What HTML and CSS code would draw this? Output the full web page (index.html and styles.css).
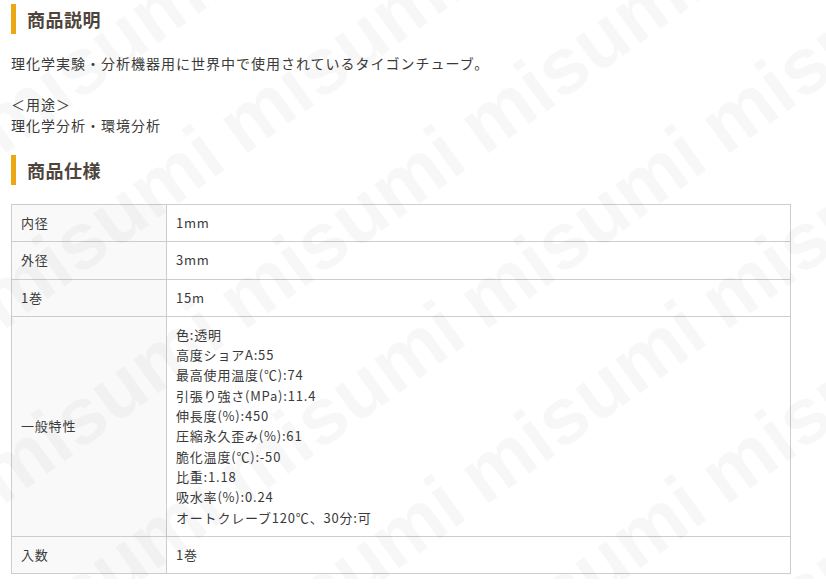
FILE: index.html
```html
<!DOCTYPE html>
<html lang="ja">
  <head>
    <meta charset="UTF-8" />
    <meta name="viewport" content="width=device-width, initial-scale=1.0" />
    <title>商品説明</title>
    <link rel="stylesheet" href="styles.css">
  </head>
  <body>
    <div class="page">
      <h2 class="title">商品説明</h2>
      <p class="desc">理化学実験・分析機器用に世界中で使用されているタイゴンチューブ。<br><br>＜用途＞<br>理化学分析・環境分析</p>

      <h2 class="title">商品仕様</h2>
      <table class="spec">
        <tr><th>内径</th><td>1mm</td></tr>
        <tr><th>外径</th><td>3mm</td></tr>
        <tr><th>1巻</th><td>15m</td></tr>
        <tr>
          <th>一般特性</th>
          <td>色:透明<br>高度ショアA:55<br>最高使用温度(℃):74<br>引張り強さ(MPa):11.4<br>伸長度(%):450<br>圧縮永久歪み(%):61<br>脆化温度(℃):-50<br>比重:1.18<br>吸水率(%):0.24<br>オートクレーブ120℃、30分:可</td>
        </tr>
        <tr><th>入数</th><td>1巻</td></tr>
      </table>
    </div>

    <div class="watermark" aria-hidden="true">
      <span>misumi</span><span>misumi</span><span>misumi</span><span>misumi</span>
      <span>misumi</span><span>misumi</span><span>misumi</span><span>misumi</span>
      <span>misumi</span><span>misumi</span><span>misumi</span><span>misumi</span>
      <span>misumi</span><span>misumi</span><span>misumi</span><span>misumi</span>
    </div>
  </body>
</html>
```

FILE: styles.css
```css
body {
  margin: 0;
  background-color: #fff;
  color: #333;
  font-family: "Noto Sans CJK JP", "Noto Sans", sans-serif;
}
.page {
  padding: 4px 36px 0 11px;
}
.title {
  margin: 0;
  height: 30px;
  line-height: 30px;
  border-left: 5px solid #eba812;
  padding-left: 11px;
  font-size: 18px;
  letter-spacing: 0.5px;
  font-weight: bold;
  color: #4e443c;
}
.desc {
  margin: 19px 0 20px 0;
  font-size: 14px;
  letter-spacing: 1px;
  line-height: 20.5px;
  color: #3a3a3a;
}
.spec {
  margin-top: 19px;
  width: 780px;
  border-collapse: collapse;
  font-size: 13px;
  letter-spacing: 0.8px;
  line-height: 20.3px;
  color: #3a3a3a;
}
.spec th,
.spec td {
  border: 1px solid #cdcdcd;
  padding: 8px 9px;
  vertical-align: middle;
  text-align: left;
}
.spec th {
  width: 136px;
  font-weight: normal;
  background-color: #f9f9f9;
}

/* faint tiled logo over the whole page */
.watermark {
  position: absolute;
  top: 0;
  left: 0;
  width: 100%;
  height: 100%;
  overflow: hidden;
  pointer-events: none;
  display: grid;
  grid-template-columns: repeat(4, 241px);
  grid-auto-rows: 175px;
  padding-left: 10px;
  margin-top: -8px;
}
.watermark span {
  align-self: end;
  font-family: "Liberation Sans", Arial, sans-serif;
  font-weight: bold;
  font-size: 80px;
  line-height: 1;
  color: rgba(0, 0, 0, 0.033);
  transform: rotate(-36deg);
  transform-origin: 0 100%;
  white-space: nowrap;
}
```
